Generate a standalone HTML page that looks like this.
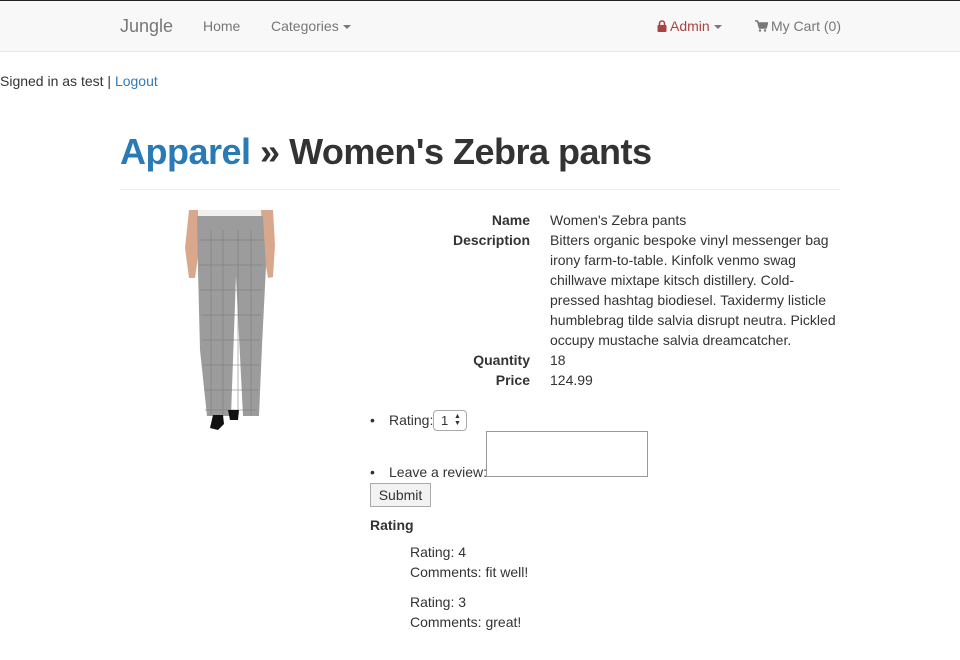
<!DOCTYPE html>
<html><head><meta charset="utf-8"><style>
*{box-sizing:border-box}
body{margin:0;width:960px;height:660px;overflow:hidden;font-family:"Liberation Sans",Arial,sans-serif;font-size:14px;color:#333;background:#fff;position:relative}
.a{position:absolute;white-space:nowrap;line-height:20px}
nav{position:absolute;left:0;top:0;width:960px;height:52px;background:#f8f8f8;border-top:1px solid #222;border-bottom:1px solid #e7e7e7}
.n{position:absolute;top:15px;color:#777;font-size:14px;line-height:20px}
.car{display:inline-block;width:0;height:0;border-left:4px solid transparent;border-right:4px solid transparent;border-top:4px solid #777;vertical-align:middle;margin-left:4px}
a{color:#337ab7;text-decoration:none}
.lbl{position:absolute;right:430px;font-weight:bold;line-height:20px}
</style></head><body>
<nav>
<div class="n" style="left:120px;top:14px;font-size:18px;line-height:22px">Jungle</div>
<div class="n" style="left:203px">Home</div>
<div class="n" style="left:271px">Categories<span class="car"></span></div>
<div class="n" style="left:657px;color:#a94442"><svg width="10" height="12" viewBox="0 0 10 12" style="vertical-align:-1px;margin-right:3px"><path d="M2.5 5V3.5a2.5 2.5 0 0 1 5 0V5" fill="none" stroke="#a94442" stroke-width="1.6"/><rect x="0.5" y="5" width="9" height="7" rx="1" fill="#a94442"/></svg>Admin<span class="car"></span></div>
<div class="n" style="left:755px"><svg width="13" height="12" viewBox="0 0 13 12" style="vertical-align:-1px;margin-right:3px"><path d="M0 1h2.5l2 7h6.5l1.5-5H3.5" fill="none" stroke="#777" stroke-width="1.5"/><path d="M4 3h8l-1.5 5H5z" fill="#777"/><circle cx="5" cy="10.5" r="1.2" fill="#777"/><circle cx="10" cy="10.5" r="1.2" fill="#777"/></svg>My Cart (0)</div>
</nav>
<div class="a" style="left:0;top:71px">Signed in as test | <a>Logout</a></div>
<div class="a" style="left:120px;top:130px;font-size:36px;line-height:44px;font-weight:bold;letter-spacing:-0.5px"><a style="color:#2a7ab5">Apparel</a> » Women's Zebra pants</div>
<div style="position:absolute;left:120px;top:189px;width:720px;border-top:1px solid #eee"></div>
<svg style="position:absolute;left:183px;top:210px" width="95" height="222" viewBox="0 0 95 222">
<path d="M6 0h12l-2 40 -4 28 -6 0 -4-30z" fill="#d9a88c"/><path d="M78 0h12l2 35 -2 32-5 1-5-30z" fill="#d9a88c"/>
<rect x="15" y="0" width="63" height="8" fill="#f2f0ee"/>
<path d="M14 6h66l3 50-4 80-3 70h-16l-7-140-5 140H24L17 140 15 60z" fill="#9c9c9c"/>
<g stroke="#777" stroke-width="1" opacity=".55"><path d="M16 30h64M16 55h64M17 80h62M18 105h60M19 130h58M20 155h56M21 180h54M22 200h52M28 20v185M40 20v185M55 20v185M68 20v185"/></g>
<path d="M30 205l-3 13 8 2 6-6 -1-9z" fill="#111"/><path d="M45 200l2 10 8 0 1-10z" fill="#111"/>
</svg>
<div class="lbl" style="top:210px">Name</div>
<div class="lbl" style="top:230px">Description</div>
<div class="lbl" style="top:350px">Quantity</div>
<div class="lbl" style="top:370px">Price</div>
<div class="a" style="left:550px;top:210px">Women's Zebra pants</div>
<div class="a" style="left:550px;top:230px;white-space:normal;width:292px">Bitters organic bespoke vinyl messenger bag irony farm-to-table. Kinfolk venmo swag chillwave mixtape kitsch distillery. Cold-&#8203;pressed hashtag biodiesel. Taxidermy listicle humblebrag tilde salvia disrupt neutra. Pickled occupy mustache salvia dreamcatcher.</div>
<div class="a" style="left:550px;top:350px">18</div>
<div class="a" style="left:550px;top:370px">124.99</div>
<div class="a" style="left:370px;top:410px">•</div>
<div class="a" style="left:389px;top:410px">Rating:</div>
<div style="position:absolute;left:433px;top:410px;width:34px;height:21px;border:1px solid #aaa;border-radius:4px;font-size:13px;line-height:19px;padding-left:7px;white-space:nowrap">1<span style="position:absolute;left:20px;top:2px;font-size:7px;line-height:7px">▲<br>▼</span></div>
<div class="a" style="left:370px;top:462px">•</div>
<div class="a" style="left:389px;top:462px">Leave a review:</div>
<div style="position:absolute;left:486px;top:431px;width:162px;height:46px;border:1px solid #999"></div>
<div style="position:absolute;left:370px;top:483px;width:61px;height:24px;border:1px solid #aaa;background:#f2f2f2;line-height:22px;text-align:center">Submit</div>
<div class="a" style="left:370px;top:515px;font-weight:bold">Rating</div>
<div class="a" style="left:410px;top:542px">Rating: 4</div>
<div class="a" style="left:410px;top:562px">Comments: fit well!</div>
<div class="a" style="left:410px;top:592px">Rating: 3</div>
<div class="a" style="left:410px;top:612px">Comments: great!</div>
</body></html>
